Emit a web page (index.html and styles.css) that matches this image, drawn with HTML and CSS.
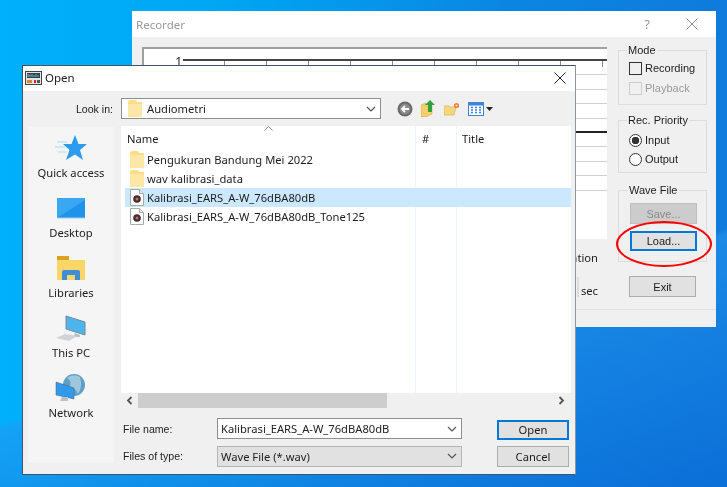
FILE: index.html
```html
<!DOCTYPE html>
<html>
  <head>
    <title>Open</title>
    <link rel="stylesheet" href="styles.css">
  </head>
  <body>
    <svg class="defs" width="0" height="0">
      <symbol id="folder" viewBox="0 0 14 17">
        <path d="M0 2 Q0 0 2 0 H7 Q9 0 9 2 H14 V17 H0 Z" fill="#fbdc8a"/>
        <path d="M0 4 H14 V17 H0 Z" fill="#fde7a6"/>
      </symbol>
      <symbol id="wave" viewBox="0 0 14 17">
        <path d="M.5 .5 H9.5 L13.5 4.5 V16.5 H.5 Z" fill="#fff" stroke="#a9a9a9"/>
        <path d="M9.5 .5 V4.5 H13.5" fill="#e8e8e8" stroke="#a9a9a9"/>
        <circle cx="7" cy="10" r="3.8" fill="#3c3038"/>
        <circle cx="7" cy="10" r="1.5" fill="#d9683c"/>
      </symbol>
      <symbol id="chev" viewBox="0 0 10 6">
        <path d="M1 1 L5 5 L9 1" fill="none" stroke="#555" stroke-width="1.2"/>
      </symbol>
    </svg>

    <div class="window recorder">
      <div class="titlebar recorder-title">
        <span class="title-text">Recorder</span>
        <span class="help">?</span>
        <svg class="close" width="12" height="12" viewBox="0 0 12 12"><path d="M.5 .5 L11.5 11.5 M11.5 .5 L.5 11.5" stroke="#8c8c8c"/></svg>
      </div>
      <div class="recorder-body">
        <div class="chart-col">
          <div class="chart">
            <span class="axis-label">1</span>
            <div class="plot"><div class="ticks"></div></div>
          </div>
          <div class="duration">Duration</div>
          <div class="time-row"><span class="time-box"></span><span class="time-unit">sec</span></div>
        </div>
        <div class="controls">
          <fieldset class="group mode-group">
            <legend>Mode</legend>
            <label class="check"><span class="box"></span>Recording</label>
            <label class="check disabled"><span class="box"></span>Playback</label>
          </fieldset>
          <fieldset class="group priority-group">
            <legend>Rec. Priority</legend>
            <label class="radio"><span class="dot on"></span>Input</label>
            <label class="radio"><span class="dot"></span>Output</label>
          </fieldset>
          <fieldset class="group wave-group">
            <legend>Wave File</legend>
            <button class="btn btn-off" type="button">Save...</button>
            <button class="btn btn-focus btn-load" type="button">Load...</button>
          </fieldset>
          <button class="btn exit" type="button">Exit</button>
        </div>
      </div>
      <div class="status-line"></div>
    </div>

    <div class="window open-dialog">
      <div class="titlebar open-title">
        <svg class="app-icon" width="17" height="14" viewBox="0 0 17 14">
          <rect x=".5" y=".5" width="16" height="13" fill="#e4e4e4" stroke="#444"/>
          <rect x="2" y="2" width="13" height="5" fill="#2f3f5f"/>
          <path d="M3 6 V3 M5 6 V4 M7 6 V3 M9 6 V4 M11 6 V3 M13 6 V4" stroke="#5fd08a"/>
          <path d="M3 4 H6" stroke="#e0528a"/>
          <rect x="2" y="9" width="5" height="3" fill="#d08a3c"/>
          <rect x="9" y="9" width="2" height="3" fill="#c23"/>
          <rect x="12" y="9" width="3" height="3" fill="#555"/>
        </svg>
        <span class="title-text dark">Open</span>
        <svg class="close" width="12" height="12" viewBox="0 0 12 12"><path d="M.5 .5 L11.5 11.5 M11.5 .5 L.5 11.5" stroke="#222"/></svg>
      </div>

      <div class="lookin">
        <span class="field-label lookin-label">Look in:</span>
        <div class="combo lookin-combo">
          <svg class="row-icon" width="14" height="17"><use href="#folder"/></svg>
          <span class="combo-text">Audiometri</span>
          <svg class="chev" width="10" height="6"><use href="#chev"/></svg>
        </div>
        <div class="tools">
          <svg width="16" height="16" viewBox="0 0 16 16">
            <circle cx="8" cy="8" r="7.5" fill="#6a6a6a"/>
            <circle cx="8" cy="8" r="5.5" fill="#8a8a8a"/>
            <path d="M12 8 H5 M8 5 L5 8 L8 11" fill="none" stroke="#fff" stroke-width="1.8"/>
          </svg>
          <svg width="15" height="17" viewBox="0 0 15 17">
            <path d="M0 5 L5 3 V6 H11 V14 L5 17 H0 Z" fill="#f3cf6c" stroke="#d9ad45" stroke-width=".6"/>
            <path d="M9 0 L14 5 H11 V12 H7 V5 H4 Z" fill="#35a03a"/>
          </svg>
          <svg width="16" height="14" viewBox="0 0 16 14">
            <path d="M0 4 H5 L6 5 H12 L10 13 H0 Z" fill="#f6d67e" stroke="#d9ad45" stroke-width=".6"/>
            <circle cx="12.5" cy="3.5" r="2.6" fill="#ef7f3a"/>
            <circle cx="12.5" cy="3.5" r="1" fill="#ffe2a8"/>
          </svg>
          <span class="views">
            <svg width="16" height="14" viewBox="0 0 16 14">
              <rect x=".5" y=".5" width="15" height="13" fill="#fff" stroke="#3f83d6"/>
              <rect x="1" y="1" width="14" height="2.5" fill="#3f83d6"/>
              <path d="M3 5.5 H5 M7 5.5 H9 M11 5.5 H13 M3 8 H5 M7 8 H9 M11 8 H13 M3 10.5 H5 M7 10.5 H9 M11 10.5 H13" stroke="#3f83d6" stroke-width="1.4"/>
            </svg>
            <svg width="7" height="4" viewBox="0 0 7 4"><path d="M0 0 H7 L3.5 4 Z" fill="#222"/></svg>
          </span>
        </div>
      </div>

      <div class="open-main">
        <div class="places">
          <div class="place">
            <svg width="32" height="32" viewBox="0 0 32 28">
              <path d="M20 1 L23.5 10 H32 L25 16 L28 26 L20 20.5 L11 26 L14.5 16 L8 10 H16.5 Z" fill="#2b9cf0"/>
              <path d="M2 8 H12 M0 13 H10 M3 18 H11" stroke="#a9dcfb" stroke-width="1.2"/>
            </svg>
            <span>Quick access</span>
          </div>
          <div class="place">
            <svg width="30" height="32" viewBox="0 0 30 24">
              <rect x="1" y="2" width="28" height="20" fill="#1f93ea"/>
              <path d="M1 2 H29 V4 L1 22 Z" fill="#3aa7f3"/>
              <path d="M1 22 H29" stroke="#9ad2f7"/>
            </svg>
            <span>Desktop</span>
          </div>
          <div class="place">
            <svg width="30" height="32" viewBox="0 0 30 26">
              <path d="M1 2 H12 L13 5 H29 V25 H1 Z" fill="#fbd566"/>
              <path d="M1 1 H13 V5 H1 Z" fill="#d9a21e"/>
              <path d="M6 25 V17 Q6 15 8 15 H22 Q24 15 24 17 V25 H19 V20 H11 V25 Z" fill="#3d8ed6"/>
            </svg>
            <span>Libraries</span>
          </div>
          <div class="place">
            <svg width="32" height="32" viewBox="0 0 32 28">
              <path d="M11 2 L30 8 V21 L11 15 Z" fill="#4db4ee" stroke="#7a8a95"/>
              <path d="M20 19 L25 21 V23 H18 Z" fill="#b9c2c8"/>
              <path d="M1 24 L10 20 L22 22 L14 27 Z" fill="#d0d4d8"/>
            </svg>
            <span>This PC</span>
          </div>
          <div class="place">
            <svg width="32" height="32" viewBox="0 0 32 30">
              <circle cx="19" cy="12" r="11" fill="#5f9fc6"/>
              <path d="M12 5 Q18 9 14 14 Q21 15 23 21 Q28 14 25 4 Q18 0 12 5Z" fill="#9cc7df"/>
              <path d="M1 9 L19 15 V26 L1 22 Z" fill="#2f9bea" stroke="#557" stroke-width=".5"/>
              <path d="M7 24 H13 V28 H5 Z" fill="#b9c2c8"/>
            </svg>
            <span>Network</span>
          </div>
        </div>

        <div class="browser">
          <div class="file-list">
            <div class="list-head">
              <span class="col-name">Name</span>
              <svg class="sort" width="9" height="5" viewBox="0 0 9 5"><path d="M.5 4.5 L4.5 .5 L8.5 4.5" fill="none" stroke="#8a8a8a"/></svg>
              <span class="col-num">#</span>
              <span class="col-title">Title</span>
            </div>
            <div class="file"><svg width="14" height="17"><use href="#folder"/></svg>Pengukuran Bandung Mei 2022</div>
            <div class="file"><svg width="14" height="17"><use href="#folder"/></svg>wav kalibrasi_data</div>
            <div class="file selected"><svg width="14" height="17"><use href="#wave"/></svg>Kalibrasi_EARS_A-W_76dBA80dB</div>
            <div class="file"><svg width="14" height="17"><use href="#wave"/></svg>Kalibrasi_EARS_A-W_76dBA80dB_Tone125</div>
          </div>
          <div class="hscroll">
            <svg width="7" height="9" viewBox="0 0 7 9"><path d="M5.5 1 L2 4.5 L5.5 8" fill="none" stroke="#555" stroke-width="1.8"/></svg>
            <div class="thumb"></div>
            <svg class="arrow-right" width="7" height="9" viewBox="0 0 7 9"><path d="M1.5 1 L5 4.5 L1.5 8" fill="none" stroke="#555" stroke-width="1.8"/></svg>
          </div>
          <div class="open-form">
            <span class="field-label">File name:</span>
            <div class="combo">
              <span class="combo-text">Kalibrasi_EARS_A-W_76dBA80dB</span>
              <svg class="chev" width="10" height="6"><use href="#chev"/></svg>
            </div>
            <button class="btn btn-focus form-open" type="button">Open</button>
            <span class="field-label">Files of type:</span>
            <div class="combo combo-off">
              <span class="combo-text">Wave File (*.wav)</span>
              <svg class="chev" width="10" height="6"><use href="#chev"/></svg>
            </div>
            <button class="btn form-cancel" type="button">Cancel</button>
          </div>
        </div>
      </div>
    </div>

    <div class="callout"></div>
  </body>
</html>
```

FILE: styles.css
```css
* {
  box-sizing: border-box;
}

html {
  background: #0a86e2;
}

body {
  margin: 0;
  width: 727px;
  height: 487px;
  overflow: hidden;
  position: relative;
  font-family: "Noto Sans", sans-serif;
  font-size: 11.2px;
  color: #1c1c1c;
  filter: blur(0.3px);
  background:
    linear-gradient(165deg, transparent 62%, rgba(40, 150, 240, 0.5) 63%, rgba(10, 110, 215, 0.9) 100%),
    linear-gradient(90deg, #00b0fb 0%, #00a6f4 30%, #0a86e2 70%, #0f7bdc 100%);
}

.defs {
  position: absolute;
}

/* windows on the desktop */
.window {
  position: absolute;
  display: flex;
  flex-direction: column;
  background: #f0f0f0;
}

.recorder {
  left: 132px;
  top: 11px;
  width: 584px;
  height: 316px;
}

.open-dialog {
  left: 22px;
  top: 65px;
  width: 554px;
  height: 410px;
  border: 1px solid #3f5566;
  border-right-color: #8a97a0;
}

.titlebar {
  display: flex;
  align-items: center;
  background: white;
  flex: none;
}

.title-text {
  font-size: 11.5px;
  color: #9a9a9a;
}

.title-text.dark {
  color: #222;
}

.close {
  margin-left: auto;
}

/* recorder */
.recorder-title {
  height: 26px;
  padding: 0 18px 0 4px;
}

.help {
  margin-left: auto;
  color: #9a9a9a;
  font-size: 13px;
}

.recorder-title .close {
  margin-left: 36px;
}

.recorder-body {
  display: flex;
  flex: 1;
}

.chart-col {
  width: 475px;
  padding: 10px 0 0 10px;
  display: flex;
  flex-direction: column;
}

.chart {
  height: 192px;
  background: white;
  border-top: 2px solid #a0a0a0;
  border-left: 2px solid #a0a0a0;
  display: flex;
  padding-top: 10px;
}

.axis-label {
  width: 39px;
  text-align: right;
  padding-right: 1px;
  line-height: 10px;
  font-size: 12px;
  margin-top: -2px;
}

.plot {
  flex: 1;
  height: 144px;
  border-top: 2px solid #444;
  background-image:
    repeating-linear-gradient(180deg, transparent 0 70px, #222 70px 71.5px, transparent 71.5px 72px),
    repeating-linear-gradient(180deg, transparent 0 13.4px, #d0d0d0 13.4px 14.4px);
}

.ticks {
  height: 6px;
  background-image: repeating-linear-gradient(90deg, transparent 0 41px, #888 41px 42px);
}

.duration {
  margin-top: 11px;
  text-align: right;
  padding-right: 9px;
}

.time-row {
  display: flex;
  justify-content: flex-end;
  gap: 2px;
  margin-top: 12px;
  padding-right: 9px;
  height: 21px;
}

.time-box {
  width: 2px;
  height: 20px;
  background: #ddd;
}

.time-unit {
  margin-top: 6px;
}

.controls {
  flex: 1;
  display: flex;
  flex-direction: column;
  align-items: flex-start;
  padding: 6px 0 0 0;
  margin-left: 11px;
  font-family: "Liberation Sans", sans-serif;
  font-size: 11px;
}

.group {
  width: 89px;
  margin: 0;
  padding: 0;
  border: 1px solid #dcdcdc;
  display: flex;
  flex-direction: column;
}

.group legend {
  margin-left: -2px;
  padding: 0 1px;
  line-height: 14px;
}

.mode-group {
  height: 62px;
  padding: 4px 0 0 10px;
  gap: 6px;
}

.priority-group {
  margin-top: 8px;
  height: 60px;
  padding: 6px 0 0 10px;
  gap: 5px;
}

.wave-group {
  margin-top: 10px;
  height: 79px;
  padding: 6px 0 0 11px;
  gap: 7px;
}

.check,
.radio {
  display: flex;
  align-items: center;
  gap: 3px;
  height: 14px;
}

.box {
  width: 13px;
  height: 13px;
  border: 1px solid #333;
  background: #f0f0f0;
}

.disabled {
  color: #9a9a9a;
}

.disabled .box {
  border-color: #ccc;
}

.dot {
  width: 13px;
  height: 13px;
  border: 1px solid #333;
  border-radius: 50%;
  background: white;
}

.dot.on {
  background: radial-gradient(circle, #333 0 3.5px, white 4px);
}

.btn {
  font: inherit;
  color: #1c1c1c;
  background: #e1e1e1;
  border: 1px solid #adadad;
  padding: 0;
  width: 67px;
  height: 21px;
}

.btn-off {
  background: #cccccc;
  border-color: #bfbfbf;
  color: #8a8a8a;
}

.btn-focus {
  border: 2px solid #0078d7;
}

.btn-load {
  height: 20px;
}

.exit {
  margin: 14px 0 0 11px;
}

.status-line {
  height: 18px;
  border-top: 1px solid #dfdfdf;
  margin-left: 444px;
  flex: none;
}

/* open dialog */
.open-title {
  height: 25px;
  padding: 0 9px 2px 2px;
  gap: 3px;
}

.lookin {
  display: flex;
  align-items: center;
  flex: none;
  height: 21px;
  margin: 7px 0 7px;
}

.field-label {
  color: #222;
  font-family: "Liberation Sans", sans-serif;
  font-size: 10.6px;
  white-space: nowrap;
}

.lookin-label {
  width: 90px;
  text-align: right;
  margin-right: 8px;
}

.combo {
  display: flex;
  align-items: center;
  background: white;
  border: 1px solid #8e8e8e;
  padding: 0 4px 0 3px;
  height: 21px;
  color: #222;
}

.lookin-combo {
  width: 260px;
  padding-left: 6px;
  gap: 5px;
}

.combo-off {
  background: #e1e1e1;
  border-color: #b5b5b5;
}

.chev {
  margin-left: auto;
}

.tools {
  display: flex;
  align-items: center;
  gap: 8px;
  margin-left: 16px;
}

.views {
  display: flex;
  align-items: center;
  gap: 2px;
}

.open-main {
  display: flex;
  flex: 1;
  padding-left: 5px;
  gap: 7px;
}

.places {
  width: 86px;
  height: 336px;
  margin-top: 1px;
  padding-top: 5px;
  background: #f5f5f5;
  display: flex;
  flex-direction: column;
}

.place {
  height: 60px;
  display: flex;
  flex-direction: column;
  align-items: center;
}

.place svg {
  flex: none;
}

.place span {
  line-height: 18px;
}

.browser {
  width: 450px;
  display: flex;
  flex-direction: column;
}

.file-list {
  height: 267px;
  background-color: white;
  background-image:
    linear-gradient(#f0f5fa, #f0f5fa),
    linear-gradient(#f0f5fa, #f0f5fa);
  background-size: 1px 100%;
  background-position: 294px 0, 335px 0;
  background-repeat: no-repeat;
}

.list-head {
  position: relative;
  height: 24px;
  display: flex;
  align-items: center;
}

.col-name {
  margin-left: 6px;
}

.sort {
  position: absolute;
  left: 143px;
  top: 0;
}

.col-num {
  position: absolute;
  left: 301px;
}

.col-title {
  position: absolute;
  left: 341px;
}

.file {
  display: flex;
  align-items: center;
  gap: 3px;
  height: 19px;
  margin-left: 4px;
  padding-left: 5px;
  white-space: nowrap;
}

.file.selected {
  background: #cce8ff;
}

.hscroll {
  height: 15px;
  display: flex;
  align-items: center;
  padding-left: 5px;
}

.thumb {
  width: 249px;
  height: 15px;
  background: #cdcdcd;
  margin-left: 5px;
}

.arrow-right {
  margin-left: auto;
  margin-right: 6px;
}

.open-form {
  display: grid;
  grid-template-columns: 59px 245px 72px;
  grid-template-rows: 21px 20px;
  column-gap: 35px;
  row-gap: 7px;
  align-items: center;
  margin: 10px 0 0 2px;
}

.form-open {
  width: 72px;
  height: 20px;
  margin-top: 2px;
}

.form-cancel {
  width: 72px;
  height: 21px;
}

/* red ring drawn over the Load button */
.callout {
  position: absolute;
  left: 616px;
  top: 221px;
  width: 96px;
  height: 46px;
  border: 2px solid #f00;
  border-radius: 50%;
}
```
